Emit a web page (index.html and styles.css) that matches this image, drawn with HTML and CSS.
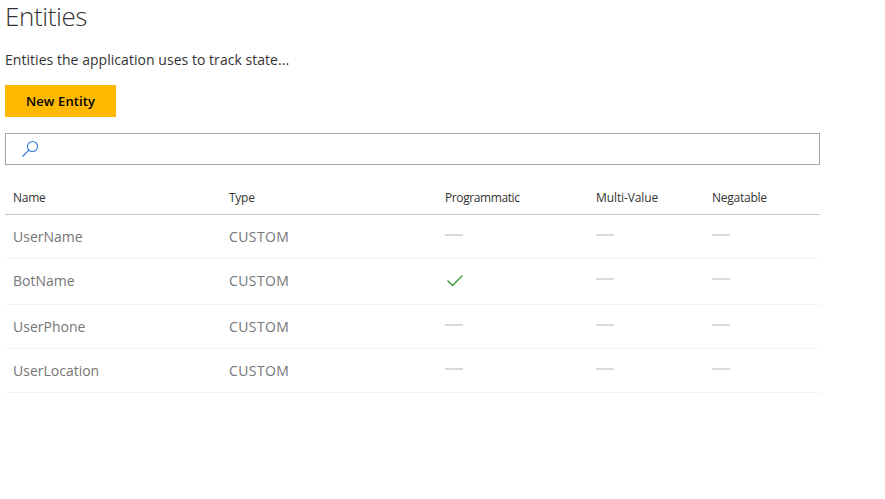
FILE: index.html
```html
<!DOCTYPE html>
<html lang="en">
<head>
<meta charset="utf-8">
<title>Entities</title>
<link rel="stylesheet" href="styles.css">
</head>
<body>
<main class="page">
  <h1 class="title">Entities</h1>
  <p class="subtitle">Entities the application uses to track state...</p>
  <button class="primary" type="button">New Entity</button>
  <div class="search">
    <svg width="18" height="18" viewBox="0 0 18 18"><circle cx="10.5" cy="6.5" r="5" /><path d="M6.9 10.1L0.5 16.5" /></svg>
  </div>
  <div class="list">
    <div class="row head"><span>Name</span><span>Type</span><span class="prog">Programmatic</span><span class="multi">Multi-Value</span><span>Negatable</span></div>
    <div class="row"><span>UserName</span><span class="custom">CUSTOM</span><i class="dash"></i><i class="dash"></i><i class="dash"></i></div>
    <div class="row tall"><span>BotName</span><span class="custom">CUSTOM</span><svg class="check" width="18" height="14" viewBox="0 0 18 14"><path d="M2.5 6.5L7.5 11.5L17.5 1.5" /></svg><i class="dash"></i><i class="dash"></i></div>
    <div class="row"><span>UserPhone</span><span class="custom">CUSTOM</span><i class="dash"></i><i class="dash"></i><i class="dash"></i></div>
    <div class="row"><span>UserLocation</span><span class="custom">CUSTOM</span><i class="dash"></i><i class="dash"></i><i class="dash"></i></div>
  </div>
</main>
</body>
</html>
```
FILE: styles.css
```css
* { box-sizing: border-box; }
body { margin: 0; background: #fff; color: #333; font-family: "Open Sans", "Noto Sans", sans-serif; }
.page { width: 815px; margin-left: 5px; }
.title { margin: 0; height: 50px; font-size: 26px; line-height: 33px; font-weight: 300; letter-spacing: -0.4px; }
.subtitle { margin: 0; height: 35px; font-size: 14px; line-height: 20px; letter-spacing: 0.04px; }
.primary { display: block; width: 111px; height: 32px; padding: 0; border: 0; background: #ffb900; color: #000; font: 600 13px/32px "Open Sans", sans-serif; letter-spacing: 0.1px; }
.search { display: flex; height: 32px; margin-top: 16px; padding: 6px 16px; border: 1px solid #a6a6a6; }
.search svg { fill: none; stroke: #2b78d8; stroke-width: 1.1; }
.list { margin-top: 16px; }
.row { display: grid; grid-template-columns: 216px 216px 151px 116px 1fr; height: 44px; padding-left: 8px; border-bottom: 1px solid #f4f4f4; color: #767676; font-size: 14px; line-height: 44px; white-space: nowrap; }
.head { height: 34px; border-color: #c8c8c8; color: #333; font-size: 12px; line-height: 34px; letter-spacing: -0.25px; }
.prog { letter-spacing: -0.4px; }
.multi { letter-spacing: -0.1px; }
.custom { letter-spacing: 0.4px; }
.tall { height: 46px; }
.dash { width: 18px; height: 2px; margin-top: 19px; background: #dadada; }
.check { margin-top: 15px; fill: none; stroke: #339933; stroke-width: 1.3; }
```
